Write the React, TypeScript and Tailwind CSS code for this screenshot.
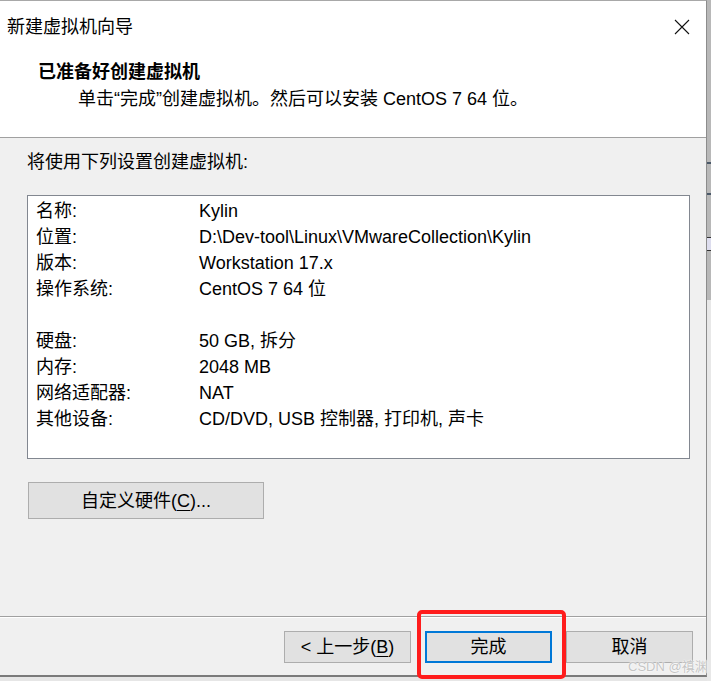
import React from "react";

const rowsA: [string, string][] = [
  ["名称:", "Kylin"],
  ["位置:", "D:\\Dev-tool\\Linux\\VMwareCollection\\Kylin"],
  ["版本:", "Workstation 17.x"],
  ["操作系统:", "CentOS 7 64 位"],
];
const rowsB: [string, string][] = [
  ["硬盘:", "50 GB, 拆分"],
  ["内存:", "2048 MB"],
  ["网络适配器:", "NAT"],
  ["其他设备:", "CD/DVD, USB 控制器, 打印机, 声卡"],
];

function Row({ label, value }: { label: string; value: string }) {
  return (
    <div className="flex h-[26px] items-center">
      <div className="w-[163px] shrink-0">{label}</div>
      <div className="whitespace-nowrap">{value}</div>
    </div>
  );
}

export default function App() {
  return (
    <div className="relative flex h-[681px] w-[711px] overflow-hidden bg-[#e6e6e6] font-['Liberation_Sans','Noto_Sans_CJK_SC',sans-serif] text-[18px] leading-[26px] text-black">
      {/* window */}
      <div className="flex h-[677px] w-[707px] shrink-0 flex-col border-t border-r border-b-2 border-t-[#a8a8a8] border-r-[#8c8c8c] border-b-[#7a7a7a] bg-[#f0f0f0]">
        {/* title bar */}
        <div className="flex h-[52px] shrink-0 items-center justify-between bg-white pl-[7px] pr-[16px]">
          <span>新建虚拟机向导</span>
          <svg width="16" height="16" viewBox="0 0 16 16" className="mt-[-1px]">
            <path d="M1 1 L15 15 M15 1 L1 15" stroke="#111" strokeWidth="1.1" fill="none" />
          </svg>
        </div>
        {/* header */}
        <div className="flex h-[85px] shrink-0 flex-col border-b border-[#a0a0a0] bg-white pt-[6px]">
          <div className="pl-[38px] font-bold">已准备好创建虚拟机</div>
          <div className="mt-[1px] pl-[78px]">单击“完成”创建虚拟机。然后可以安装 CentOS 7 64 位。</div>
        </div>
        {/* body */}
        <div className="flex flex-1 flex-col pt-[11px]">
          <div className="pl-[27px]">将使用下列设置创建虚拟机:</div>
          <div className="ml-[27px] mt-[20px] h-[264px] w-[663px] border border-[#828790] bg-white pl-[8px] pt-[2px]">
            {rowsA.map(([l, v]) => (
              <Row key={l} label={l} value={v} />
            ))}
            <div className="h-[26px]" />
            {rowsB.map(([l, v]) => (
              <Row key={l} label={l} value={v} />
            ))}
          </div>
          <button className="ml-[28px] mt-[23px] flex h-[37px] w-[236px] items-center justify-center border border-[#adadad] bg-[#e1e1e1]">
            自定义硬件(<span className="underline underline-offset-[3px]">C</span>)...
          </button>
        </div>
        {/* footer */}
        <div className="h-[59px] shrink-0 border-t border-[#a0a0a0]">
          <div className="flex h-full justify-end gap-[14px] border-t border-white pr-[13px] pt-[13px]">
            <button className="flex h-[32px] w-[127px] items-center justify-center border border-[#adadad] bg-[#e1e1e1]">
              &lt; 上一步(<span className="underline underline-offset-[3px]">B</span>)
            </button>
            <button className="flex h-[32px] w-[127px] items-center justify-center border-2 border-[#0078d7] bg-[#e1e1e1]">
              完成
            </button>
            <button className="flex h-[32px] w-[127px] items-center justify-center border border-[#adadad] bg-[#e1e1e1]">
              取消
            </button>
          </div>
        </div>
      </div>
      {/* background window strip at the right */}
      <div className="flex w-[4px] flex-col">
        <div className="h-[300px] bg-[#b8b8b8] pt-[162px]">
          <div className="h-[2px] bg-[#4a5868]" />
          <div className="mt-[29px] h-[2px] bg-[#4a5868]" />
          <div className="mt-[42px] h-[14px] border-y border-[#333] bg-[#dde]" />
        </div>
        <div className="flex-1 bg-[#e8e8e8]" />
      </div>
      {/* red annotation box */}
      <div className="absolute left-[417px] top-[610px] h-[69px] w-[149px] rounded-[5px] border-[4px] border-[#ff1c1c]" />
      {/* watermark */}
      <div className="absolute left-[628px] top-[659px] whitespace-nowrap text-[13px] leading-[16px] text-[#c4c4c4] [text-shadow:0_0_1px_#fff,0_0_2px_#fff]">
        CSDN @禛渊
      </div>
    </div>
  );
}
